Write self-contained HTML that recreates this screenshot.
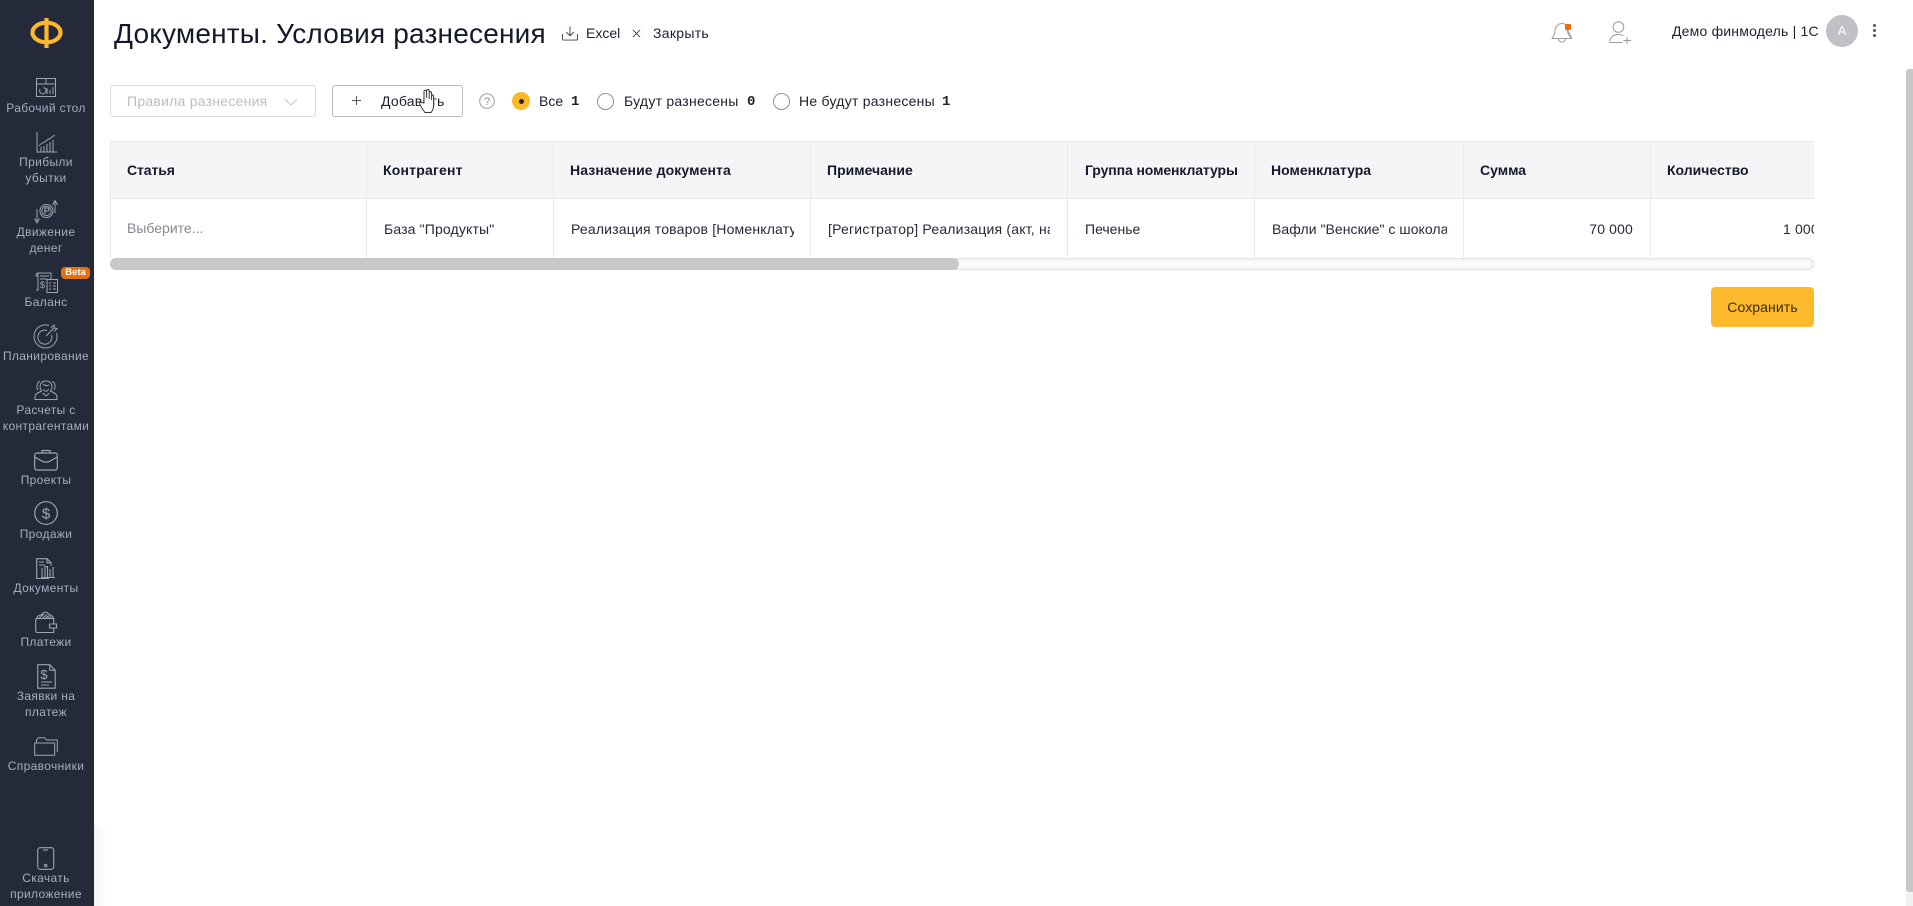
<!DOCTYPE html>
<html lang="ru"><head><meta charset="utf-8"><title>Документы. Условия разнесения</title>
<style>
*{box-sizing:border-box}
html,body{margin:0;padding:0;width:1913px;height:906px;overflow:hidden;background:#fff}
body{position:relative;font-family:"Liberation Sans","DejaVu Sans",sans-serif;color:#1c2030;font-size:14px}
.t{position:absolute;white-space:nowrap;line-height:20px;height:20px}
.abs{position:absolute}
#side{position:absolute;left:0;top:0;width:94px;height:906px;background:#252a3a}
.l{position:absolute;left:0;width:92px;text-align:center;font-size:12px;line-height:16px;color:#a6adbd;letter-spacing:.35px;white-space:nowrap}
svg{position:absolute;overflow:visible}
.ic{fill:none;stroke:#9fa4b0;stroke-width:1}
.hd{position:absolute;top:160px;font-weight:bold;font-size:14px;line-height:20px;color:#14182a;white-space:nowrap}
.cell{position:absolute;top:219px;font-size:14px;line-height:20px;white-space:nowrap;overflow:hidden;color:#252938;letter-spacing:.15px}
.v{position:absolute;top:141px;width:1px;height:117px;background:#e8e9ed}
</style></head><body>

<div id="side">
<svg style="left:0;top:0" width="94" height="60" viewBox="0 0 94 60"><ellipse cx="46.5" cy="32.500" rx="14" ry="9.800" fill="none" stroke="#fdb92c" stroke-width="4.200"/><rect x="44.400" y="18" width="4.200" height="30" fill="#fdb92c"/></svg>

<svg class="ic" style="left:36px;top:78px" width="20" height="20" viewBox="0 0 20 20"><path d="M.5.5h19v18H.5zM.5 6h19M10 .5V6M4 11a3.2 3.2 0 1 0 3.5-1.500M11 10v6M14 12v4M17 9v7"/></svg>
<div class="l" style="top:100px">Рабочий стол</div>

<svg class="ic" style="left:36px;top:132px" width="21" height="21" viewBox="0 0 21 21"><path d="M1 0v20h20M3 14c3-4 5-3 7-5s4-2 6-4l3-2M5 20v-5M8 20v-6M11 20v-8M14 20v-10M17 20V8"/></svg>
<div class="l" style="top:154px">Прибыли<br>убытки</div>

<svg class="ic" style="left:34px;top:200px" width="24" height="24" viewBox="0 0 24 24"><circle cx="12.500" cy="11" r="6.500"/><circle cx="12.500" cy="11" r="4.600"/><path d="M11 14V8h2.400a1.500 1.500 0 0 1 0 3H10M3 9v12M.5 18.500L3 23l2.500-4.500M21 13V2M18.500 5L21 .5 23.500 5"/></svg>
<div class="l" style="top:224px">Движение<br>денег</div>

<svg class="ic" style="left:35px;top:272px" width="23" height="21" viewBox="0 0 23 21"><path d="M3 1h13v6M3 1c-1 0-2 1-2 3h2M3 1v17H1M5 4h9M5 7h7"/><rect x="12" y="7.500" width="10.500" height="13"/><path d="M14 11h2M18 11h3M14 14h2M18 14h3M14 17h2M18 17h3"/><text x="5" y="16" font-size="9" font-family="Liberation Sans" fill="#a2a7b3" stroke="none">$</text></svg>
<div class="abs" style="left:61px;top:267px;width:29px;height:12px;background:#e86f0b;border-radius:4px;color:#fff;font:bold 9.500px/12px 'Liberation Sans',sans-serif;text-align:center">Beta</div>
<div class="l" style="top:294px">Баланс</div>

<svg class="ic" style="left:34px;top:324px" width="24" height="24" viewBox="0 0 24 24"><path d="M15 1.500A11.500 11.500 0 1 0 22.500 9M13 6.500a7 7 0 1 0 4.500 4.500M12 12L20 4M17 4l3-3 .5 3 2.500.5-3 3"/></svg>
<div class="l" style="top:348px">Планирование</div>

<svg class="ic" style="left:34px;top:380px" width="24" height="21" viewBox="0 0 24 21"><path d="M8 11C5 9 5 1 12 1s7 8 4 10M9 4c2 2 4 2 6 1M9.500 9c1 3 4 3 5 0M8 11c-3 1-7 3-7 6v2.500h22V17c0-3-4-5-7-6M8.500 13L12 16l3.500-3M6 1.500C3 2 2 7 4 10M18 1.500c3 .5 4 5.500 2 8.500"/></svg>
<div class="l" style="top:402px">Расчеты с<br>контрагентами</div>

<svg class="ic" style="left:34px;top:449px;stroke-width:1.200" width="24" height="22" viewBox="0 0 24 22"><rect x=".7" y="4" width="22.600" height="17" rx="2"/><path d="M8 4V1.500h8V4M.7 8l9 5h4.600l9-5"/></svg>
<div class="l" style="top:472px">Проекты</div>

<svg style="left:34px;top:501px" width="24" height="24" viewBox="0 0 24 24"><circle cx="12" cy="12" r="11.300" fill="none" stroke="#9fa4b0" stroke-width="1.200"/><text x="12" y="17.500" font-size="15" text-anchor="middle" font-family="Liberation Sans" fill="#a2a7b3">$</text></svg>
<div class="l" style="top:526px">Продажи</div>

<svg class="ic" style="left:36px;top:558px;stroke-width:1.100" width="20" height="21" viewBox="0 0 20 21"><path d="M13 20.500H.7V.7H11l4 4v3M11 .7v4h4M3 4h5M3 7h6M6 19V10M9 19V8.500h2.500V19M14 19v-8M17 19V9M5 19.500h14"/></svg>
<div class="l" style="top:580px">Документы</div>

<svg class="ic" style="left:35px;top:611px;stroke-width:1.100" width="22" height="22" viewBox="0 0 22 22"><path d="M.7 9v10.500q0 2 2 2h16V17M.7 9q0-1.500 2-1.500h16V13M21.500 13h-7v4h7zM.7 9L3 5l3-1 2-2 3-1 3 2 3 2 2 2.500M4 7l5-4M7 7.500l5-4M10 7.500l4-3M13 7.500l3-2"/></svg>
<div class="l" style="top:634px">Платежи</div>

<svg class="ic" style="left:37px;top:664px;stroke-width:1.100" width="19" height="25" viewBox="0 0 19 25"><path d="M.7.7h12l5.500 5.500v18H.7zM12.700.7v5.500h5.500M4 18h11M4 21h8"/><text x="7" y="15" font-size="13" text-anchor="middle" font-family="Liberation Sans" fill="#a2a7b3" stroke="none">$</text></svg>
<div class="l" style="top:688px">Заявки на<br>платеж</div>

<svg class="ic" style="left:34px;top:737px;stroke-width:1" width="24" height="19" viewBox="0 0 24 19"><path d="M.7 18.300V6h20v12.300zM2.500 6V3l2-2.300h6L12.500 3H23.300v12"/></svg>
<div class="l" style="top:758px">Справочники</div>

<svg class="ic" style="left:37px;top:847px;stroke-width:1.100" width="18" height="23" viewBox="0 0 18 23"><rect x=".7" y=".7" width="16" height="21.600" rx="2.500"/><path d="M6 3h5"/><circle cx="8.700" cy="18.500" r="1.200"/></svg>
<div class="l" style="top:870px">Скачать<br>приложение</div>
</div>
<div class="abs" style="left:94px;top:825px;width:12px;height:81px;background:linear-gradient(90deg,#f5f5f5,#fff)"></div>

<!-- header -->
<div class="t" style="left:114px;top:17px;height:34px;line-height:34px;font-size:28px;color:#14182a;letter-spacing:.2px">Документы. Условия разнесения</div>
<svg class="ic" style="left:562px;top:26px;stroke:#3b3f4c" width="16" height="15" viewBox="0 0 17 15"><path d="M8.500 0v9.500M4.500 6l4 4 4-4M.6 8v5.500q0 1 1 1h13.800q1 0 1-1V8"/></svg>
<div class="t" style="left:586px;top:23px;font-size:14px">Excel</div>
<svg class="ic" style="left:632px;top:29px;stroke:#3b3f4c" width="9" height="9" viewBox="0 0 10 10"><path d="M1 1l8 8M9 1L1 9"/></svg>
<div class="t" style="left:653px;top:23px;font-size:14px;letter-spacing:.3px">Закрыть</div>

<svg class="ic" style="left:1551px;top:21px;stroke:#9a9da6" width="22" height="23" viewBox="0 0 22 23"><path d="M.7 17.500c2-2 3-4 3.300-8 .3-4 3-7 7-7 1.500 0 2.500.3 3.500 1M16 8c.3 4 2 7.500 5 9.500zM.7 17.500H21M7.500 18c.5 4 6 4 7 0"/></svg>
<div class="abs" style="left:1565px;top:24px;width:6px;height:6px;background:#e86f0b;border-radius:1px"></div>
<svg class="ic" style="left:1609px;top:21px;stroke:#9a9da6" width="23" height="23" viewBox="0 0 23 23"><circle cx="9.500" cy="6" r="5.300"/><path d="M.7 21.500c0-5 3.500-8 9-8 2 0 3.500.5 5 1.300M.7 21.500H13M18 16v7M14.500 19.500H22"/></svg>
<div class="t" style="left:1672px;top:21px;font-size:14px;letter-spacing:.2px">Демо финмодель | 1С</div>
<div class="abs" style="left:1826px;top:15px;width:32px;height:32px;border-radius:50%;background:#bfc1c7;color:#fff;text-align:center;font-size:13px;line-height:32px">А</div>
<div class="abs" style="left:1873px;top:24px;width:3px;height:3px;border-radius:50%;background:#555"></div>
<div class="abs" style="left:1873px;top:29px;width:3px;height:3px;border-radius:50%;background:#555"></div>
<div class="abs" style="left:1873px;top:34px;width:3px;height:3px;border-radius:50%;background:#555"></div>

<!-- toolbar -->
<div class="abs" style="left:110px;top:85px;width:206px;height:32px;border:1px solid #d9dadd;border-radius:3px"></div>
<div class="t" style="left:127px;top:91px;color:#bcbec4;letter-spacing:.25px">Правила разнесения</div>
<svg style="left:284px;top:98px" width="14" height="8" viewBox="0 0 14 8"><path d="M1 1l6 6 6-6" fill="none" stroke="#c6c8cc" stroke-width="1.100"/></svg>
<div class="abs" style="left:332px;top:85px;width:131px;height:32px;border:1px solid #b9bbc0;border-radius:3px"></div>
<svg style="left:352px;top:96px" width="9" height="9" viewBox="0 0 10 10"><path d="M5 0v10M0 5h10" stroke="#555" stroke-width="1.100"/></svg>
<div class="t" style="left:381px;top:91px;letter-spacing:.2px">Добавить</div>
<svg style="left:419px;top:89px" width="16" height="25" viewBox="0 0 16 25"><path d="M5 14V2.500a1.300 1.300 0 0 1 2.600 0V9V1.800a1.300 1.300 0 0 1 2.600 0V10V4a1.200 1.200 0 0 1 2.400 0v7V7a1 1 0 0 1 2 0v9c0 4-1 5-2.500 7.500H6C4 21 2 18 .8 15c-.5-1.500 1-2.500 2-1.500z" fill="#fff" stroke="#333" stroke-width="1"/></svg>
<svg style="left:479px;top:93px" width="16" height="16" viewBox="0 0 16 16"><circle cx="8" cy="8" r="7.300" fill="none" stroke="#9a9da6"/><text x="8" y="12" font-size="11" text-anchor="middle" font-family="Liberation Sans" fill="#8a8d96">?</text></svg>
<div class="abs" style="left:512px;top:92px;width:18px;height:18px;border-radius:50%;background:#fdb92c"></div>
<div class="abs" style="left:519px;top:99px;width:5px;height:5px;border-radius:50%;background:#222"></div>
<div class="t" style="left:539px;top:91px">Все</div>
<div class="t" style="left:571px;top:92px;font-weight:bold;font-family:'Liberation Mono',monospace">1</div>
<div class="abs" style="left:597px;top:93px;width:17px;height:17px;border-radius:50%;border:1px solid #8f929a"></div>
<div class="t" style="left:624px;top:91px;letter-spacing:.25px">Будут разнесены</div>
<div class="t" style="left:747px;top:92px;font-weight:bold;font-family:'Liberation Mono',monospace">0</div>
<div class="abs" style="left:773px;top:93px;width:17px;height:17px;border-radius:50%;border:1px solid #8f929a"></div>
<div class="t" style="left:799px;top:91px;letter-spacing:.25px">Не будут разнесены</div>
<div class="t" style="left:942px;top:92px;font-weight:bold;font-family:'Liberation Mono',monospace">1</div>

<!-- table -->
<div class="abs" style="left:110px;top:141px;width:1704px;height:58px;background:#f5f5f8;border-top:1px solid #e8e9ed;border-bottom:1px solid #e8e9ed"></div>
<div class="v" style="left:110px"></div><div class="v" style="left:366px"></div><div class="v" style="left:553px"></div><div class="v" style="left:810px"></div><div class="v" style="left:1067px"></div><div class="v" style="left:1254px"></div><div class="v" style="left:1463px"></div><div class="v" style="left:1650px"></div>
<div class="hd" style="left:127px;letter-spacing:-.1px">Статья</div>
<div class="hd" style="left:383px;letter-spacing:.2px">Контрагент</div>
<div class="hd" style="left:570px;letter-spacing:.1px">Назначение документа</div>
<div class="hd" style="left:827px">Примечание</div>
<div class="hd" style="left:1085px;letter-spacing:-.1px">Группа номенклатуры</div>
<div class="hd" style="left:1271px">Номенклатура</div>
<div class="hd" style="left:1480px">Сумма</div>
<div class="hd" style="left:1667px">Количество</div>

<div class="cell" style="left:127px;top:218px;color:#85888f;letter-spacing:0">Выберите...</div>
<div class="cell" style="left:384px">База "Продукты"</div>
<div class="cell" style="left:571px;width:223px;letter-spacing:.18px">Реализация товаров [Номенклатура]</div>
<div class="cell" style="left:828px;width:222px;letter-spacing:.2px">[Регистратор] Реализация (акт, накладная)</div>
<div class="cell" style="left:1085px;letter-spacing:0">Печенье</div>
<div class="cell" style="left:1272px;width:175px;letter-spacing:.05px">Вафли "Венские" с шоколадом</div>
<div class="cell" style="left:1540px;width:93px;text-align:right">70 000</div>
<div class="cell" style="left:1783px;width:31px">1 000</div>

<div class="abs" style="left:110px;top:258px;width:1704px;height:12px;border-radius:6px;background:#fbfbfb;box-shadow:inset 0 0 3px #c4c4c4"></div>
<div class="abs" style="left:110px;top:258px;width:849px;height:12px;border-radius:6px;background:#c8c8c8"></div>

<div class="abs" style="left:1711px;top:287px;width:103px;height:40px;background:#fdb92c;border-radius:4px;text-align:center;line-height:40px;font-size:14px;color:#3a2a10;letter-spacing:.1px">Сохранить</div>

<!-- page scrollbar -->
<div class="abs" style="left:1906px;top:69px;width:7px;height:823px;background:#c8c8c8;border-radius:3px 0 0 3px"></div>
<div class="abs" style="left:1906px;top:892px;width:7px;height:14px;background:#f1f1f1"></div>
</body></html>
